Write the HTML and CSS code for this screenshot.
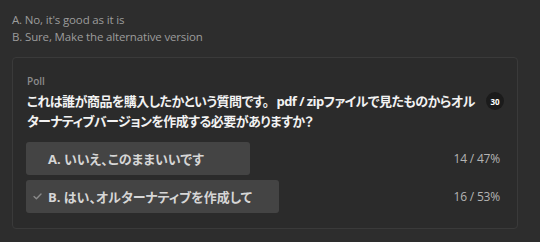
FILE: index.html
```html
<!DOCTYPE html>
<html lang="ja">
<head>
<meta charset="utf-8">
<link rel="stylesheet" href="styles.css">
</head>
<body>
<div class="intro">
  <div class="intro-line">A. No, it's good as it is</div>
  <div class="intro-line">B. Sure, Make the alternative version</div>
</div>
<section class="poll">
  <div class="poll-label">Poll</div>
  <div class="question-row">
    <p class="question">これは誰が商品を購入したかという質問です。<span class="gap"></span>pdf / zipファイルで見たものからオル<br>ターナティブバージョンを作成する必要がありますか？</p>
    <span class="badge">30</span>
  </div>
  <div class="options">
    <div class="option">
      <button class="choice choice-a"><span class="check"></span><span class="choice-text">A. いいえ、このままいいです</span></button>
      <span class="count">14 / 47%</span>
    </div>
    <div class="option">
      <button class="choice choice-b"><span class="check"><svg width="9" height="7" viewBox="0 0 9 7"><path d="M1 3.6 L3.4 5.8 L8 1" fill="none" stroke="#8a8a8a" stroke-width="1.4" stroke-linecap="round" stroke-linejoin="round"/></svg></span><span class="choice-text">B. はい、オルターナティブを作成して</span></button>
      <span class="count">16 / 53%</span>
    </div>
  </div>
</section>
</body>
</html>
```

FILE: styles.css
```css
html, body {
  margin: 0;
  padding: 0;
}
body {
  background: #2d2d2d;
  font-family: "Open Sans", "Noto Sans CJK JP", sans-serif;
  color: #e6e6e6;
  width: 540px;
  height: 242px;
  overflow: hidden;
}
.intro {
  padding: 11px 12px 0 12px;
}
.intro-line {
  font-size: 11.5px;
  line-height: 17px;
  color: #9c9c9c;
  letter-spacing: -0.15px;
}
.poll {
  margin: 12px 22px 0 12px;
  border: 1px solid #3a3a3a;
  border-radius: 4px;
  height: 172px;
  padding: 16px 13px 0 14px;
  box-sizing: border-box;
  background: #2b2b2b;
}
.poll-label {
  font-size: 10px;
  font-weight: 600;
  color: #8c8c8c;
  line-height: 14px;
}
.question-row {
  display: flex;
  align-items: flex-start;
  justify-content: space-between;
  margin-top: 3px;
}
.question {
  margin: 0;
  font-size: 13px;
  font-weight: 700;
  line-height: 20px;
  color: #f2f2f2;
  white-space: nowrap;
  font-feature-settings: "palt";
  letter-spacing: -0.55px;
}
.gap {
  display: inline-block;
  width: 8px;
}
.badge {
  width: 18px;
  height: 18px;
  border-radius: 50%;
  background: #1b1b1b;
  color: #ffffff;
  font-size: 8px;
  font-weight: 700;
  display: flex;
  align-items: center;
  justify-content: center;
  margin-top: 1px;
  flex: none;
}
.options {
  display: flex;
  flex-direction: column;
  gap: 5px;
  margin-top: 11px;
}
.option {
  display: flex;
  align-items: center;
  justify-content: space-between;
}
.choice {
  display: flex;
  align-items: center;
  height: 33px;
  margin: 0 0 0 -1px;
  padding: 0;
  border: none;
  border-radius: 3px;
  background: #444444;
  font-family: inherit;
  cursor: pointer;
  text-align: left;
}
.choice-a { width: 224px; }
.choice-b { width: 253px; }
.check {
  width: 22px;
  padding-left: 7px;
  box-sizing: border-box;
  flex: none;
  display: flex;
  align-items: center;
}
.choice-text {
  font-size: 13px;
  font-weight: 700;
  color: #d6d6d6;
  font-feature-settings: "palt";
  white-space: nowrap;
}
.count {
  font-size: 12px;
  color: #b4b4b4;
  margin-right: 4px;
  letter-spacing: -0.2px;
}
```
